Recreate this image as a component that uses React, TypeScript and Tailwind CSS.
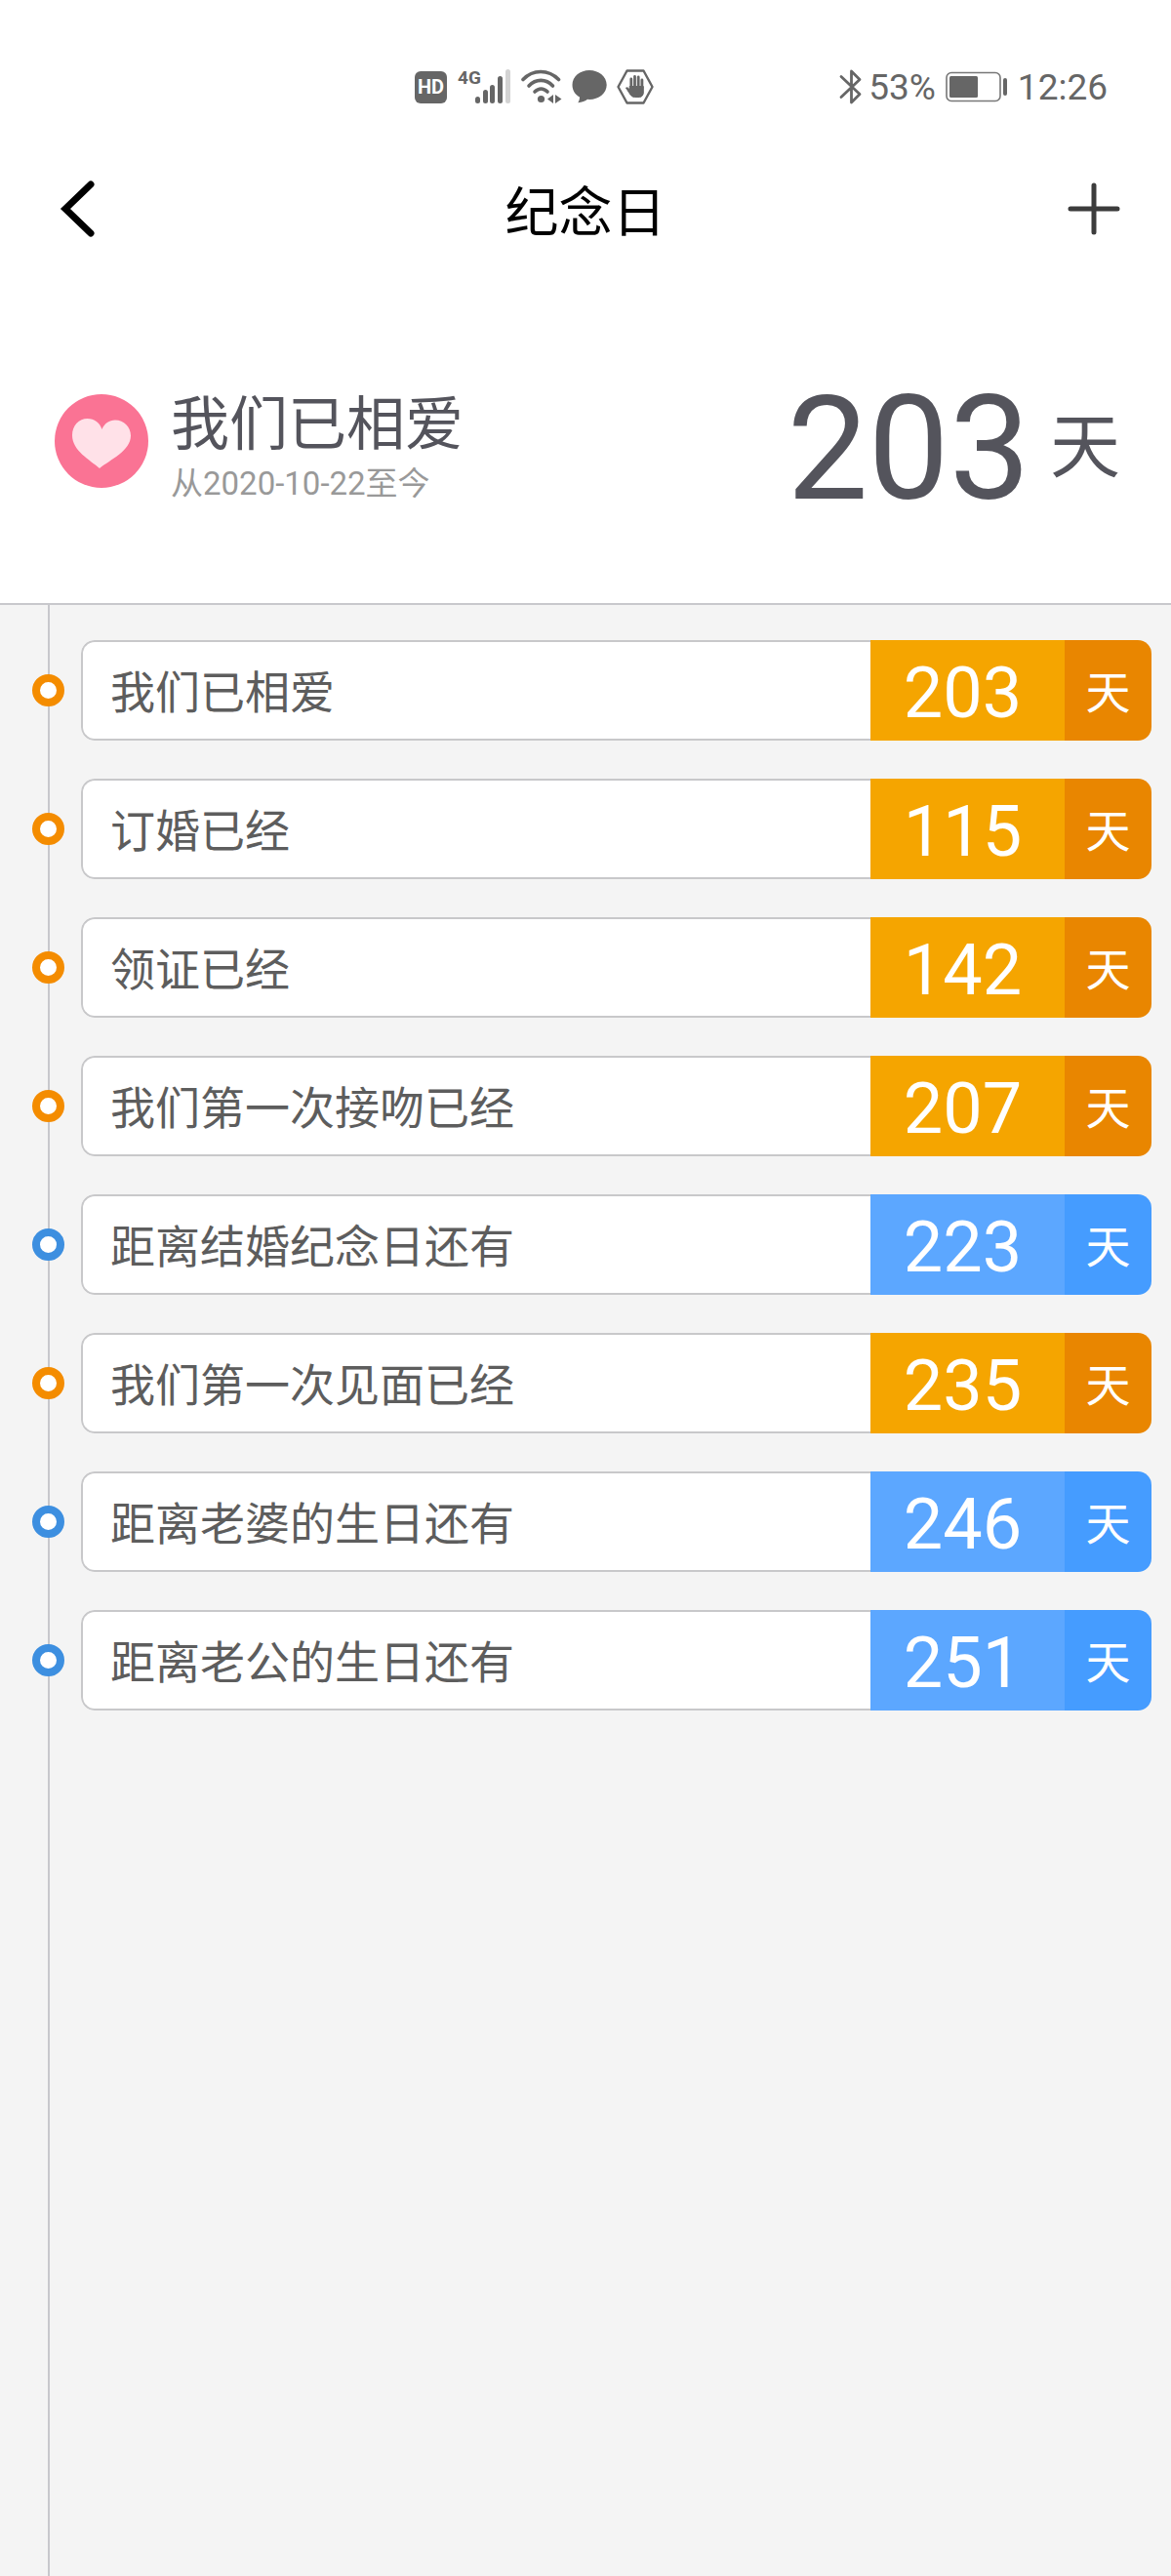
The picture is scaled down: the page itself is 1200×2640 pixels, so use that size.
import React from 'react';

type Anniversary = {
    title: string;
    days: number;
    upcoming?: boolean;
};

const anniversaries: Anniversary[] = [
    { title: "我们已相爱", days: 203 },
    { title: "订婚已经", days: 115 },
    { title: "领证已经", days: 142 },
    { title: "我们第一次接吻已经", days: 207 },
    { title: "距离结婚纪念日还有", days: 223, upcoming: true },
    { title: "我们第一次见面已经", days: 235 },
    { title: "距离老婆的生日还有", days: 246, upcoming: true },
    { title: "距离老公的生日还有", days: 251, upcoming: true },
];

const SignalIcon: React.FC = () => (
    <svg width="56" height="48" viewBox="0 -6 56 48" fill="#666">
        <text x="1" y="15" fontSize="19" fontWeight="700" fontFamily="Roboto, sans-serif">4G</text>
        <rect x="19" y="28" width="5" height="7" rx="2.5" />
        <rect x="27" y="21" width="5" height="14" rx="2.5" />
        <rect x="34" y="16" width="5" height="19" rx="2.5" />
        <rect x="42" y="7" width="5" height="28" rx="2.5" />
        <rect x="50" y="0" width="5" height="35" rx="2.5" fill="#d3d3d3" />
    </svg>
);

const WifiIcon: React.FC = () => (
    <svg width="42" height="36" viewBox="0 0 42 36" fill="none" stroke="#666" strokeWidth="3.6" strokeLinecap="round">
        <path d="M2 10.5C12-.2 28-.2 38.5 10.5" />
        <path d="M8 17C15 9.5 25.5 9.5 32.5 17" />
        <path d="M14 23C18 19 23 19 27 23" />
        <circle cx="20.5" cy="30.5" r="3.6" fill="#666" stroke="none" />
        <path d="M33 26v9l-6-4.500zM35 26v9l6.500-4.500z" fill="#666" stroke="none" />
    </svg>
);

const ChatIcon: React.FC = () => (
    <svg width="36" height="36" viewBox="0 0 36 36" fill="#666">
        <path d="M18 1C8.300 1 .5 7.500.5 16c0 5.500 3 10 7.500 12.500 0 2.500-.8 4.600-1.800 5.800 4.300-.2 7.800-1.800 9.800-3.500l2 .2c9.700 0 17.700-6.500 17.700-15S27.700 1 18 1z" />
    </svg>
);

const HandIcon: React.FC = () => (
    <svg width="38" height="36" viewBox="0 0 38 36" fill="none" stroke="#666" strokeLinecap="round" strokeLinejoin="round">
        <path d="M10.5 1.5h17L36.5 18l-9 16.500h-17L1.500 18z" strokeWidth="2.4" />
        <path d="M14.8 19V10M18.5 18V7.500M22.200 18V8M25.900 19v-8" strokeWidth="2.8" />
        <path d="M13.5 17.5h13.8v6.500c0 2.500-1.800 4.500-4 4.500h-4.800c-2.500 0-4-1.500-5.500-4l-3.500-5.500c1.500-.6 2.800.4 4 2z" fill="#666" strokeWidth="1" />
    </svg>
);

const BluetoothIcon: React.FC = () => (
    <svg width="24" height="36" viewBox="0 0 24 36" fill="none" stroke="#666" strokeWidth="2.8" strokeLinecap="round" strokeLinejoin="round">
        <path d="M2 7.5l19 18-8.500 8.500V2l8.500 8.500-19 18" />
    </svg>
);

const BatteryIcon: React.FC = () => (
    <svg width="64" height="32" viewBox="0 0 64 32" fill="none">
        <rect x="1" y="1.5" width="55" height="29" rx="5" stroke="#777" strokeWidth="1.6" />
        <rect x="4" y="5" width="29" height="22" rx="1.5" fill="#666" />
        <rect x="59" y="7" width="4" height="18" rx="2" fill="#666" />
    </svg>
);

const StatusBar: React.FC = () => (
    <div className="flex h-[176px] items-center justify-between pr-[65px] pl-[425px] text-[37px] leading-none text-[#666]">
        <div className="flex items-center gap-2.5 pt-0.5">
            <span className="flex h-[33px] w-[33px] items-center justify-center rounded-md bg-[#666] text-[20px] font-bold text-white">HD</span>
            <SignalIcon />
            <WifiIcon />
            <ChatIcon />
            <HandIcon />
        </div>
        <div className="flex items-center gap-2.5 pt-0.5">
            <span className="flex items-center gap-1.5">
                <BluetoothIcon />
                53%
            </span>
            <BatteryIcon />
            <time>12:26</time>
        </div>
    </div>
);

const NavBar: React.FC = () => (
    <header className="flex h-[76px] items-center justify-between px-[52px]">
        <button type="button" aria-label="返回" className="flex w-14 items-center pl-2">
            <svg width="40" height="62" viewBox="0 0 40 62" fill="none" stroke="#000" strokeWidth="7">
                <path d="M33 6L7 31l26 25" strokeLinecap="round" strokeLinejoin="miter" />
            </svg>
        </button>
        <h1 className="pt-2 text-[55px] leading-none text-black">纪念日</h1>
        <button type="button" aria-label="添加" className="flex w-14 items-center justify-end">
            <svg width="54" height="54" viewBox="0 0 54 54" fill="none" stroke="#3c3c3c" strokeWidth="5" strokeLinecap="round">
                <path d="M27 3v48M3 27h48" />
            </svg>
        </button>
    </header>
);

const Hero: React.FC = () => (
    <section className="flex items-center justify-between border-b-2 border-[#c8c8cc] pt-[134px] pr-[52px] pb-[100px] pl-14 text-[#54545c]">
        <div className="flex items-center gap-[23px]">
            <svg width="96" height="96" viewBox="0 0 96 96">
                <circle cx="48" cy="48" r="48" fill="#fa7394" />
                <path d="M46 76C36 67 18 58 18 42c0-10 7-17 15.500-17C41 25 46 29 48.500 36 51 30 56 26.500 62 26.500c9 0 16 7 16 16C78 58 57 67 46 76z" fill="#ffe1e8" />
            </svg>
            <div className="pt-4">
                <h2 className="text-[60px] leading-[68px]">我们已相爱</h2>
                <p className="mt-1 text-[33px] leading-[44px] text-[#999]">从2020-10-22至今</p>
            </div>
        </div>
        <p className="flex items-center gap-5 pt-3.5 leading-[108px]">
            <span className="pt-1 text-[148px]">203</span>
            <span className="text-[72px]">天</span>
        </p>
    </section>
);

const AnniversaryRow: React.FC<{ item: Anniversary }> = ({ item }) => (
    <li className="flex items-center gap-[17px]">
        <span className={`h-[33px] w-[33px] shrink-0 rounded-full border-8 bg-white ${item.upcoming ? 'border-[#3d8fe0]' : 'border-[#f48c00]'}`} />
        <div className="flex h-[103px] flex-1 overflow-hidden rounded-[14px] text-white">
            <h3 className="flex flex-1 items-center rounded-l-[14px] border-2 border-r-0 border-[#c8c8ca] bg-white pt-1 pl-7 text-[46px] leading-none text-[#5d5d5d]">
                {item.title}
            </h3>
            <span className={`flex w-[199px] items-center justify-center pt-1.5 pr-2.5 text-[72px] leading-none ${item.upcoming ? 'bg-[#5ca7ff]' : 'bg-[#f5a500]'}`}>
                {item.days}
            </span>
            <span className={`flex w-[89px] items-center justify-center pt-1 text-[46px] leading-none ${item.upcoming ? 'bg-[#459cff]' : 'bg-[#e98600]'}`}>
                天
            </span>
        </div>
    </li>
);

const App: React.FC = () => {
    return (
        <div lang="zh-CN" className="flex min-h-screen flex-col bg-white font-[Roboto,'Noto_Sans_CJK_SC',sans-serif]">
            <StatusBar />
            <NavBar />
            <Hero />
            <main className="relative flex-1 bg-[#f4f4f4] pt-9 pr-5 pb-9 pl-[33px]">
                {/* timeline running behind the dots */}
                <div className="absolute inset-y-0 left-[49px] w-0.5 bg-[#c8c8cc]" />
                <ul className="relative flex flex-col gap-[39px]">
                    {anniversaries.map((item) => (
                        <AnniversaryRow key={item.title} item={item} />
                    ))}
                </ul>
            </main>
        </div>
    );
};

export default App;
